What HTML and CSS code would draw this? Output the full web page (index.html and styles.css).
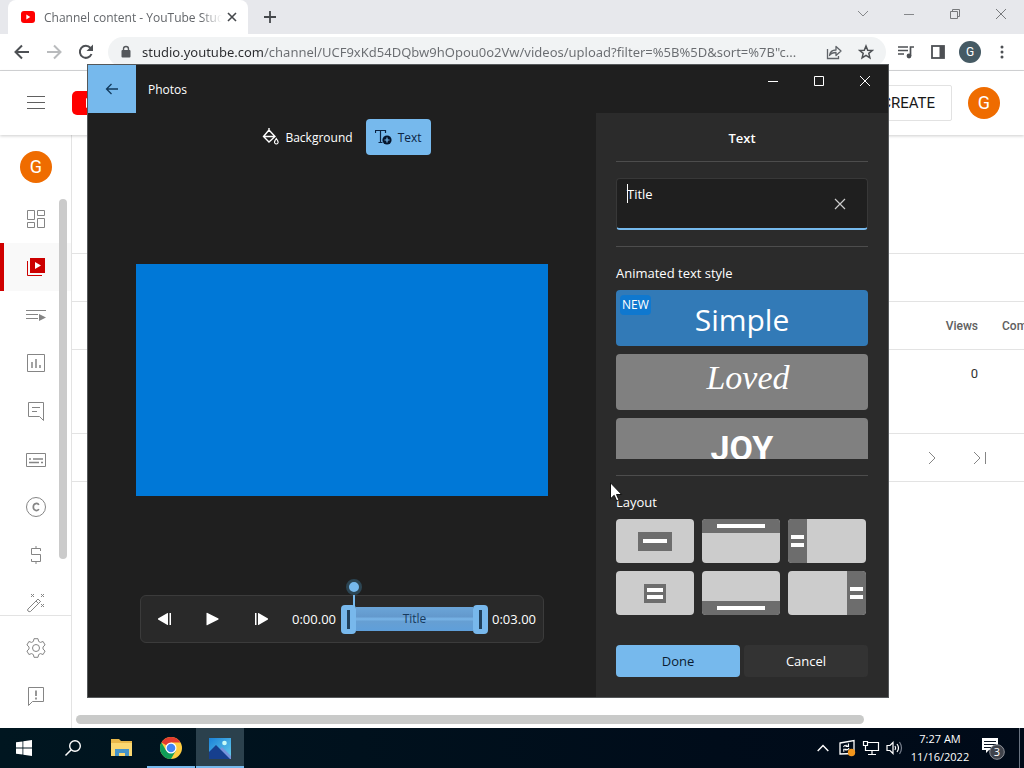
FILE: index.html
```html
<!DOCTYPE html>
<html lang="en">
<head>
<meta charset="utf-8">
<title>Channel content - YouTube Studio</title>
<link rel="stylesheet" href="styles.css">
</head>
<body>
<div class="desktop">
  <div class="browser">
    <div class="tabstrip">
      <div class="tab">
        <svg class="favicon" width="16" height="16" viewBox="0 0 16 16"><rect x="1" y="2" width="14" height="12" rx="3" fill="#f00"/><path d="M6.300 5.500v5l4-2.500z" fill="#fff"/></svg>
        <span class="tab-title">Channel content - YouTube Studio</span>
        <button class="tab-close" aria-label="Close tab"><svg width="10" height="10" viewBox="0 0 10 10"><path d="M1 1l8 8M9 1l-8 8" stroke="#45484c" stroke-width="1.600"/></svg></button>
      </div>
      <button class="new-tab" aria-label="New tab"><svg width="14" height="14" viewBox="0 0 14 14"><path d="M7 1v12M1 7h12" stroke="#45484c" stroke-width="1.800"/></svg></button>
      <div class="win-controls">
        <button aria-label="Search tabs"><svg width="12" height="12" viewBox="0 0 12 12"><path d="M1 3l5 5 5-5" fill="none" stroke="#85878a"/></svg></button>
        <button aria-label="Minimize"><svg width="12" height="12" viewBox="0 0 12 12"><path d="M1 6.500h10" stroke="#85878a"/></svg></button>
        <button aria-label="Restore"><svg width="12" height="12" viewBox="0 0 12 12"><path d="M1.500 3.500h7v7h-7zM3.500 3.500v-2h7v7h-2" fill="none" stroke="#77797c"/></svg></button>
        <button aria-label="Close"><svg width="12" height="12" viewBox="0 0 12 12"><path d="M1 1l10 10M11 1L1 11" stroke="#77797c"/></svg></button>
      </div>
    </div>
    <div class="toolbar">
      <button class="tool" aria-label="Back"><svg width="18" height="18" viewBox="0 0 18 18"><path d="M16 9H3M9 2.500L2.500 9 9 15.500" fill="none" stroke="#4d5054" stroke-width="2"/></svg></button>
      <button class="tool" aria-label="Forward"><svg width="18" height="18" viewBox="0 0 18 18"><path d="M2 9h13M9 2.500L15.500 9 9 15.500" fill="none" stroke="#b9bbbd" stroke-width="2"/></svg></button>
      <button class="tool" aria-label="Reload"><svg width="18" height="18" viewBox="0 0 18 18"><path d="M14.500 11A6 6 0 1 1 13.500 5" fill="none" stroke="#4d5054" stroke-width="2"/><path d="M16 1.500V8H9.500z" fill="#4d5054"/></svg></button>
      <div class="omnibox">
        <svg width="12" height="14" viewBox="0 0 12 14"><rect x="1.500" y="5" width="9" height="7.500" rx="1" fill="#55585c"/><path d="M3.500 5.500V4a2.500 2.500 0 0 1 5 0v1.500" fill="none" stroke="#55585c" stroke-width="1.400"/></svg>
        <input class="url" type="text" aria-label="Address" value="studio.youtube.com/channel/UCF9xKd54DQbw9hOpou0o2Vw/videos/upload?filter=%5B%5D&amp;sort=%7B&quot;c...">
        <button class="tool" aria-label="Share"><svg width="16" height="16" viewBox="0 0 16 16"><path d="M1.500 5v9.500h11V12" fill="none" stroke="#5f6368" stroke-width="1.300"/><path d="M3.500 11.500c.5-4 3-5.500 6.500-5.500V2.500L15 7l-5 4.500V8.500c-3 0-5 .7-6.500 3z" fill="none" stroke="#5f6368" stroke-width="1.300" stroke-linejoin="round"/></svg></button>
        <button class="tool" aria-label="Bookmark"><svg width="16" height="16" viewBox="0 0 16 16"><path d="M8 2l1.700 4.200 4.600.3-3.500 2.900 1.100 4.400L8 11.400l-3.900 2.400 1.100-4.400-3.500-2.900 4.600-.3z" fill="none" stroke="#4d5054" stroke-width="1.500"/></svg></button>
      </div>
      <button class="tool" aria-label="Media"><svg width="18" height="16" viewBox="0 0 18 16"><path d="M1 3h10M1 6.500h10M1 10h6" stroke="#4d5054" stroke-width="1.700"/><path d="M13.500 12V3H17" fill="none" stroke="#4d5054" stroke-width="1.700"/><circle cx="12" cy="12" r="2.400" fill="#4d5054"/></svg></button>
      <button class="tool" aria-label="Side panel"><svg width="14" height="14" viewBox="0 0 14 14"><rect x="1" y="1" width="12" height="12" fill="none" stroke="#4d5054" stroke-width="1.800"/><rect x="8.500" y="1" width="4.500" height="12" fill="#4d5054"/></svg></button>
      <button class="tool" aria-label="Profile"><span class="profile">G</span></button>
      <button class="tool" aria-label="Menu"><svg width="4" height="14" viewBox="0 0 4 14"><g fill="#4d5054"><circle cx="2" cy="2" r="1.500"/><circle cx="2" cy="7" r="1.500"/><circle cx="2" cy="12" r="1.500"/></g></svg></button>
    </div>
    <header class="studio-header">
      <button class="menu" aria-label="Guide"><svg width="18" height="14" viewBox="0 0 18 14"><path d="M0 .5h18M0 6.500h18M0 12.500h18" stroke="#606060"/></svg></button>
      <svg width="34" height="24" viewBox="0 0 34 24"><rect width="34" height="24" rx="5" fill="#f00"/><path d="M14 7v10l8-5z" fill="#fff"/></svg>
      <button class="create"><svg width="20" height="20" viewBox="0 0 20 20"><path d="M2 4h12v4l4-2v8l-4-2v4H2z" fill="#c00"/></svg>CREATE</button>
      <span class="avatar">G</span>
    </header>
    <div class="studio">
      <nav class="side">
        <div class="side-scroll">
          <span class="avatar">G</span>
          <a href="#" aria-label="Dashboard"><svg width="20" height="20" viewBox="0 0 20 20"><path d="M1.500 1.500h7v9h-7zM11.500 1.500h7v5h-7zM11.500 9.500h7v9h-7zM1.500 13.500h7v5h-7z"/></svg></a>
          <a href="#" class="active" aria-label="Content"><svg width="20" height="20" viewBox="0 0 20 20"><path d="M4 1h15v15H4z" fill="#c00"/><path d="M9 5v7l6-3.500z" fill="#fff"/><path d="M1.500 4v14.500H16" class="red"/></svg></a>
          <a href="#" aria-label="Playlists"><svg width="20" height="20" viewBox="0 0 20 20"><path d="M0 5.500h20M0 9.500h12M0 13.500h12"/><path d="M13 9v7l7-3.500z" class="solid"/></svg></a>
          <a href="#" aria-label="Analytics"><svg width="20" height="20" viewBox="0 0 20 20"><path d="M1.500 1.500h17v17h-17z"/><path d="M6 9v6M10 6v9M14 12v3" stroke-width="1.500"/></svg></a>
          <a href="#" aria-label="Comments"><svg width="20" height="20" viewBox="0 0 20 20"><path d="M2.500 1.500h15v18l-4-4h-11zM6 6.500h8M6 10.500h5"/></svg></a>
          <a href="#" aria-label="Subtitles"><svg width="20" height="20" viewBox="0 0 20 20"><path d="M.5 4.500h19v13H.5z"/><path d="M3 10h2M7 10h10M3 13.500h10M15 13.500h2" stroke-width="1.500"/></svg></a>
          <a href="#" aria-label="Copyright"><svg width="20" height="20" viewBox="0 0 20 20"><circle cx="10" cy="10" r="9.500"/><path d="M12.800 8c-1-2.500-5.500-2-5.500 2s4.500 4.500 5.500 2" stroke-width="1.700"/></svg></a>
          <a href="#" aria-label="Earn"><svg width="20" height="20" viewBox="0 0 20 20"><path d="M14.500 6V3.500h-9v6h9v7h-9V14M10 1v2.500M10 16.500V19"/></svg></a>
          <a href="#" aria-label="Customization"><svg width="20" height="20" viewBox="0 0 20 20"><path d="M2 16L12 6l2.500 2.500-10 10q-1.500.5-2.500-.5t0-2zM10 8l2.500 2.500"/><path d="M5 1l3 3M8 1L5 4M15 1l3 3M18 1l-3 3M15 11l3 3M18 11l-3 3M12 6l2.500 2.500"/></svg></a>
          <span class="side-thumb"></span>
        </div>
        <div class="side-foot">
          <a href="#" aria-label="Settings"><svg width="20" height="20" viewBox="0 0 20 20"><path d="M8 .7h4l.6 2.700 1.800 1 2.700-.9 2 3.500-2.100 1.900v2.200l2.100 1.900-2 3.500-2.700-.9-1.800 1-.6 2.700H8l-.6-2.700-1.800-1-2.700.9-2-3.500L3 11.100V8.900L.9 7l2-3.500 2.700.9 1.800-1z" stroke-linejoin="round"/><circle cx="10" cy="10" r="3.500"/></svg></a>
          <a href="#" aria-label="Send feedback"><svg width="20" height="20" viewBox="0 0 20 20"><path d="M2.500 1.500h15v14h-11l-4 4z"/><path d="M10 4.500v5.500M10 11.500v2" stroke-width="1.700"/></svg></a>
        </div>
      </nav>
      <main class="content">
        <div class="band heading"></div>
        <div class="band filter"></div>
        <table class="videos">
          <thead><tr><th class="video"></th><th class="num">Views</th><th class="next">Comments</th></tr></thead>
          <tbody><tr><td></td><td class="num">0</td><td></td></tr></tbody>
        </table>
        <div class="band pager">
          <button aria-label="Next page"><svg width="14" height="14" viewBox="0 0 14 14"><path d="M4 1l6 6-6 6"/></svg></button>
          <button aria-label="Last page"><svg width="14" height="14" viewBox="0 0 14 14"><path d="M1 1l6 6-6 6M12.500 1v12"/></svg></button>
        </div>
        <div class="hscroll"><span></span></div>
      </main>
    </div>
  </div>

  <footer class="taskbar">
    <button class="task" aria-label="Start"><svg width="16" height="16" viewBox="0 0 16 16"><path d="M0 2.300L6.500 1.400V7.600H0zM7.300 1.300L16 0v7.600H7.300zM0 8.400h6.500v6.200L0 13.700zM7.300 8.400H16V16l-8.700-1.300z" fill="#fff"/></svg></button>
    <button class="task" aria-label="Search"><svg width="18" height="18" viewBox="0 0 18 18"><circle cx="11" cy="7" r="5.300" fill="none" stroke="#fff" stroke-width="1.400"/><path d="M7.200 10.800L1.500 16.500" stroke="#fff" stroke-width="1.500"/></svg></button>
    <button class="task" aria-label="File Explorer"><svg width="22" height="20" viewBox="0 0 22 20"><path d="M0 1h8l2 2h11v15H0z" fill="#e9b84a"/><path d="M0 5h21v13H0z" fill="#fbd871"/><path d="M4 18v-7h14v7h-4v-3H8v3z" fill="#4593c9"/></svg></button>
    <button class="task running" aria-label="Chrome"><svg width="22" height="22" viewBox="0 0 22 22"><circle cx="11" cy="11" r="11" fill="#ffcd40"/><path d="M11 11L1.470 5.500A11 11 0 0 1 20.530 5.500H11z" fill="#e33b2e"/><path d="M1.470 5.500A11 11 0 0 0 11 22L15.800 13.700 6.200 13.700z" fill="#0f9d58"/><circle cx="11" cy="11" r="5.500" fill="#fff"/><circle cx="11" cy="11" r="4.300" fill="#4285f4"/></svg></button>
    <button class="task running current" aria-label="Photos"><svg width="22" height="21" viewBox="0 0 22 21"><defs><linearGradient id="sky" x2="1" y2="1"><stop stop-color="#1b82d8"/><stop offset="1" stop-color="#66cdec"/></linearGradient></defs><path d="M0 0h22v21H0z" fill="url(#sky)"/><path d="M10 12l3-3 9 9v3H12z" fill="#7793dc"/><path d="M0 14l7-7 14 14H0z" fill="#163f8e"/><circle cx="15.500" cy="5" r="2.300" fill="#c9fbf7"/></svg></button>
    <div class="tray">
      <button aria-label="Show hidden icons"><svg width="12" height="8" viewBox="0 0 12 8"><path d="M.7 7L6 1.500 11.300 7" fill="none" stroke="#fff" stroke-width="1.400"/></svg></button>
      <button aria-label="Updates"><svg width="18" height="18" viewBox="0 0 18 18"><path d="M2 4l14-2.500v13L2 15z" fill="none" stroke="#fff" stroke-width="1.300"/><path d="M5.500 8q1-2.300 4-1.500M10.500 4.500v3h-3M11 9q-1 2.600-4 1.700M5.800 12.800v-2.600h2.800" fill="none" stroke="#fff" stroke-width="1.100"/><circle cx="13.500" cy="13.500" r="3.700" fill="#f2951c"/></svg></button>
      <button aria-label="Network"><svg width="18" height="16" viewBox="0 0 18 16"><path d="M5.500 2.500h11v8h-13V7M10 10.500v4M6 14.500h8M1.500 1.500h4v4h-4zM3.500 5.500v5" fill="none" stroke="#fff" stroke-width="1.200"/></svg></button>
      <button aria-label="Volume"><svg width="18" height="16" viewBox="0 0 18 16"><path d="M1 5.500h3l3-3v11l-3-3H1z" fill="none" stroke="#fff" stroke-width="1.200"/><path d="M9 6q1.300 2 0 4M11 4q3 4 0 8" fill="none" stroke="#fff" stroke-width="1.200"/><path d="M13.500 2q4 6 0 12" fill="none" stroke="#777f8c" stroke-width="1.200"/></svg></button>
      <div class="clock"><span>7:27 AM</span><span>11/16/2022</span></div>
      <button class="action" aria-label="Notifications"><svg width="24" height="24" viewBox="0 0 24 24"><path d="M1 2h16v12H8l-3 3v-3H1z" fill="#fff"/><path d="M3 5.500h12M3 8.500h12M3 11.500h8" stroke="#0a1422" stroke-width="1.200"/><circle cx="16" cy="16" r="7.300" fill="#40434b" stroke="#8e9198"/></svg><span class="badge">3</span></button>
      <span class="peek"></span>
    </div>
  </footer>

  <section class="photos">
    <div class="titlebar">
      <button class="back" aria-label="Back"><svg width="14" height="12" viewBox="0 0 14 12"><path d="M13 6H1.500M6.500 1l-5 5 5 5" fill="none" stroke="#123a5c" stroke-width="1.300"/></svg></button>
      <span class="app-name">Photos</span>
      <div class="photo-controls">
        <button aria-label="Minimize"><svg width="12" height="12" viewBox="0 0 12 12"><path d="M1 6.500h10"/></svg></button>
        <button aria-label="Maximize"><svg width="12" height="12" viewBox="0 0 12 12"><path d="M1.500 1.500h9v9h-9z"/></svg></button>
        <button aria-label="Close"><svg width="12" height="12" viewBox="0 0 12 12"><path d="M1 1l10 10M11 1L1 11"/></svg></button>
      </div>
    </div>
    <div class="editor">
      <div class="workspace">
        <div class="modes">
          <button class="mode"><svg width="17" height="18" viewBox="0 0 17 18"><path d="M7 2L1.500 8.500 7 14l6-5.500zM7 0v4M2 8.500h11" fill="none" stroke="#fff" stroke-width="1.400"/><path d="M14.300 10.500q-2.300 3-1.600 4.500 1.600 2 3.200 0 .7-1.500-1.600-4.500z" fill="none" stroke="#fff" stroke-width="1.200"/></svg>Background</button>
          <button class="mode selected"><svg width="17" height="18" viewBox="0 0 17 18"><path d="M.5 5V2.500h10V5M5.500 2.500v12M3.500 14.500h4" fill="none" stroke="#0b2444" stroke-width="1.200"/><circle cx="12" cy="12" r="4.600" fill="#04142c"/><path d="M12 9.500v5M9.500 12h5" stroke="#78b8ec" stroke-width="1.200"/></svg>Text</button>
        </div>
        <div class="stage"><div class="canvas"></div></div>
        <div class="transport">
          <button aria-label="Previous frame"><svg width="14" height="14" viewBox="0 0 14 14"><path d="M9.500 1q.5-.3.500.5v11q0 .8-.5.500L0 7.500v-1zM11.500 1H13v12h-1.500z"/></svg></button>
          <button aria-label="Play"><svg width="14" height="14" viewBox="0 0 14 14"><path d="M.5 1v12q.5.500 1 0L12.500 7.500v-1L1.500 1q-.5-.5-1 0z"/></svg></button>
          <button aria-label="Next frame"><svg width="14" height="14" viewBox="0 0 14 14"><path d="M4.500 1q-.5-.3-.5.500v11q0 .8.500.500l9.500-5.500v-1zM1 1h1.500v12H1z"/></svg></button>
          <span class="time start">0:00.00</span>
          <div class="range">
            <span class="handle"></span><span class="span">Title</span><span class="handle"></span>
            <span class="knob"></span>
          </div>
          <span class="time">0:03.00</span>
        </div>
      </div>
      <aside class="panel">
        <h2>Text</h2>
        <div class="field">
          <textarea aria-label="Title text">Title</textarea>
          <span class="caret"></span>
          <button aria-label="Clear"><svg width="12" height="12" viewBox="0 0 12 12"><path d="M1 1l10 10M11 1L1 11" stroke="#ccc" stroke-width="1.200"/></svg></button>
        </div>
        <h3>Animated text style</h3>
        <div class="styles">
          <button class="style simple"><span class="new">NEW</span>Simple</button>
          <button class="style loved">Loved</button>
          <button class="style joy">JOY</button>
        </div>
        <h3 class="layout-title">Layout</h3>
        <div class="layouts">
          <button class="tile center" aria-label="Center line"><span class="block wide"><i></i></span></button>
          <button class="tile top" aria-label="Top"><span class="block"><i></i></span></button>
          <button class="tile left" aria-label="Left"><span class="block"><i></i><i></i></span></button>
          <button class="tile center" aria-label="Center"><span class="block"><i></i><i></i></span></button>
          <button class="tile bottom" aria-label="Bottom"><span class="block"><i></i></span></button>
          <button class="tile right" aria-label="Right"><span class="block"><i></i><i></i></span></button>
        </div>
        <div class="actions"><button class="done">Done</button><button class="cancel">Cancel</button></div>
      </aside>
    </div>
  </section>
  <svg class="cursor" width="13" height="20" viewBox="0 0 13 20"><path d="M.5.8v16l3.700-3.500 2.500 5.700 2.300-1-2.500-5.500h5.200z" fill="#fff" stroke="#111"/></svg>
</div>
</body>
</html>
```
FILE: styles.css
```css
* { box-sizing: border-box; }
body { margin: 0; font-family: "Open Sans", "Noto Sans", sans-serif; font-size: 13px; }
button { border: 0; padding: 0; background: none; color: inherit; font: inherit; display: flex; align-items: center; justify-content: center; }
svg { display: block; flex: none; }
h2, h3 { margin: 0; }

.desktop { position: relative; display: flex; flex-direction: column; height: 100vh; overflow: hidden; background: #fff; }
.browser { flex: 1; min-height: 0; display: flex; flex-direction: column; }

.tabstrip { display: flex; height: 34px; padding-left: 8px; background: #e7e8ec; }
.tab { display: flex; align-items: center; width: 240px; padding: 0 10px 0 12px; background: #fff; border-radius: 8px 8px 0 0; }
.tab-title { flex: 1; min-width: 0; margin-left: 8px; overflow: hidden; white-space: nowrap; font-size: 12px; color: #63666a; -webkit-mask-image: linear-gradient(90deg, #000 88%, transparent); mask-image: linear-gradient(90deg, #000 88%, transparent); }
.tab-close { width: 12px; height: 16px; margin-left: 4px; }
.new-tab { width: 28px; margin-left: 8px; }
.win-controls { display: flex; margin-left: auto; height: 28px; }
.win-controls button { width: 46px; }

.toolbar { display: flex; align-items: center; height: 37px; padding: 0 6px; background: #fff; border-bottom: 1px solid #d5d6d8; }
.tool { width: 32px; height: 28px; flex: none; }
.omnibox { flex: 1; display: flex; align-items: center; height: 30px; margin: 0 4px 0 6px; padding: 0 4px 0 12px; border-radius: 15px; background: #f1f3f4; }
.url { flex: 1; min-width: 0; margin-left: 10px; padding: 0; border: 0; outline: 0; font: 13px "Noto Sans", "Open Sans", sans-serif; color: transparent; background: linear-gradient(90deg, #2b2c2f 121px, #696c70 121px); -webkit-background-clip: text; background-clip: text; }
.profile { width: 22px; height: 22px; border-radius: 50%; background: #455a64; color: #fff; font: 12px/22px Roboto, sans-serif; }

.studio-header { position: relative; display: flex; align-items: center; height: 64px; padding-right: 24px; flex: none; box-shadow: 0 1px 3px rgba(0, 0, 0, .2); }
.menu { width: 72px; height: 40px; }
.create { height: 36px; margin: 0 16px 0 auto; padding: 0 16px 0 12px; gap: 8px; border: 1px solid #e2e2e2; border-radius: 2px; font: 15px Roboto, sans-serif; color: #181818; }
.avatar { width: 32px; height: 32px; border-radius: 50%; background: #ef6c00; color: #fff; text-align: center; font: 18px/32px Roboto, sans-serif; flex: none; }

.studio { flex: 1; min-height: 0; display: flex; }
.side { display: flex; flex-direction: column; width: 72px; border-right: 1px solid #e3e3e3; }
.side-scroll { position: relative; flex: 1; min-height: 0; overflow: hidden; display: flex; flex-direction: column; padding-top: 16px; }
.side-scroll .avatar { margin: 0 0 12px 20px; }
.side a { display: flex; align-items: center; height: 48px; padding-left: 26px; flex: none; }
.side svg { fill: none; stroke: #858585; }
.side .solid { fill: #858585; stroke: none; }
.side .red { stroke: #c00; }
.side .active { padding-left: 22px; border-left: 4px solid #d00000; background: #f9f9f9; }
.side .active path:not(.red) { stroke: none; }
.side-thumb { position: absolute; top: 64px; right: 4px; width: 8px; height: 360px; border-radius: 4px; background: #cbcbcb; }
.side-foot { padding: 8px 0; border-top: 1px solid #e3e3e3; }

.content { flex: 1; min-width: 0; display: flex; flex-direction: column; overflow: hidden; }
.band { height: 48px; border-bottom: 1px solid #e3e3e3; flex: none; }
.heading { height: 119px; }
.videos { width: 100%; table-layout: fixed; border-collapse: separate; border-spacing: 0; font: 13px Roboto, sans-serif; }
.videos th, .videos td { padding: 0; border-bottom: 1px solid #e3e3e3; white-space: nowrap; overflow: hidden; }
.videos th { height: 48px; font-size: 12px; font-weight: 500; color: #606060; }
.videos td { height: 84px; padding-top: 16px; vertical-align: top; color: #333; }
.videos .num { width: 80px; text-align: right; }
.videos .next { width: 46px; padding-left: 24px; text-align: left; }
.pager { display: flex; justify-content: flex-end; align-items: center; padding-right: 20px; }
.pager button { width: 48px; height: 40px; }
.pager svg { fill: none; stroke: #858585; }
.hscroll { margin-top: auto; padding: 0 160px 4px 4px; }
.hscroll span { display: block; height: 9px; border-radius: 5px; background: #c9cac9; }

.taskbar { display: flex; gap: 1px; height: 40px; flex: none; background: linear-gradient(90deg, #001620, #000c1a 70%, #000a18); color: #fff; }
.task { width: 48px; border-bottom: 2px solid transparent; border-top: 2px solid transparent; }
.running { border-bottom-color: #76b9ed; }
.current { background: #2b414d; }
.tray { display: flex; align-items: center; margin-left: auto; }
.tray button { width: 24px; height: 40px; }
.clock { display: flex; flex-direction: column; align-items: center; width: 66px; font-size: 11px; line-height: 18px; }
.tray .action { position: relative; width: 40px; }
.badge { position: absolute; left: 17px; top: 17px; width: 14px; text-align: center; font-size: 11px; line-height: 14px; }
.tray .action svg { margin-right: 0; }
.action .badge { left: 17px; }
.peek { width: 5px; height: 40px; margin-left: 6px; border-left: 1px solid #6a7482; }

.photos { position: absolute; left: 87px; right: 135px; top: 64px; bottom: 70px; display: flex; flex-direction: column; border: 1px solid #55585a; background: #1f1f1f; color: #fff; }
.titlebar { display: flex; height: 48px; }
.back { width: 48px; background: #76b9ed; }
.app-name { margin-left: 12px; line-height: 50px; font-size: 12px; }
.photo-controls { display: flex; height: 32px; margin-left: auto; }
.photo-controls button { width: 46px; }
.photo-controls svg { fill: none; stroke: #fff; }
.editor { flex: 1; min-height: 0; display: flex; }
.workspace { flex: 1; min-width: 0; display: flex; flex-direction: column; padding: 6px 48px 54px; }
.modes { display: flex; justify-content: center; gap: 4px; margin-bottom: 10px; }
.mode { height: 36px; padding: 0 9px; gap: 6px; border-radius: 4px; font-size: 12px; }
.selected { background: #76b9ed; color: #0b2444; }
.stage { flex: 1; display: flex; align-items: center; }
.canvas { width: 100%; aspect-ratio: 16 / 9; background: #0078d7; }
.transport { display: flex; align-items: center; height: 48px; margin: 0 4px; padding-right: 7px; border: 1px solid #3b3b3b; border-radius: 6px; background: #292929; }
.transport button { width: 48px; height: 46px; flex: none; }
.transport svg { fill: #fff; }
.time { font-size: 13px; line-height: 18px; margin-left: 4px; }
.start { margin-left: 7px; }
.range { position: relative; flex: 1; display: flex; align-items: center; margin-left: 5px; }
.handle { width: 15px; height: 29px; border-radius: 4px; flex: none; background: linear-gradient(#20405c, #20405c) center / 3px 19px no-repeat #78b8ec; }
.span { flex: 1; height: 24px; text-align: center; font-size: 12px; line-height: 24px; color: #173a5e; background: linear-gradient(#6ba5d8, #6399cd 40%, #79b5e8 50%, #669fd3 60%, #5f9fda); }
.knob { position: absolute; left: 5px; top: -26px; width: 16px; height: 16px; border: 3px solid #2c4553; border-radius: 50%; background: #76b9ed; }
.knob::after { content: ""; position: absolute; left: 4px; top: 13px; width: 2px; height: 12px; background: #76b9ed; }

.panel { width: 292px; flex: none; display: flex; flex-direction: column; padding: 0 20px 20px; background: #2b2b2b; }
.panel h2 { height: 49px; border-bottom: 1px solid #4d4d4d; text-align: center; font-size: 13px; font-weight: 600; line-height: 50px; }
.field { position: relative; display: flex; height: 52px; margin: 16px 0; align-items: center; border: 1px solid #383838; border-bottom: 2px solid #76b9ed; border-radius: 4px; background: #1f1f1f; }
.field textarea { flex: 1; min-width: 0; height: 48px; padding: 5px 10px; border: 0; outline: 0; resize: none; background: none; color: #fff; font: 13px/19px "Open Sans", sans-serif; }
.field button { width: 32px; height: 32px; margin-right: 11px; }
.caret { position: absolute; left: 10px; top: 5px; width: 1px; height: 19px; background: #fff; }
.panel h3 { height: 44px; border-top: 1px solid #4d4d4d; font-size: 13px; font-weight: 400; line-height: 52px; }
.styles { display: flex; flex-direction: column; gap: 8px; height: 169px; overflow: hidden; flex: none; }
.style { position: relative; height: 56px; flex: none; border-radius: 4px; background: #808080; }
.simple { padding-top: 2px; background: #327ab7; font-size: 30px; }
.new { position: absolute; left: 4px; top: 5px; padding: 0 2px; border-radius: 4px; background: #0f78cf; font-size: 12px; line-height: 20px; }
.loved { padding: 0 0 8px 12px; font: italic 34px "Liberation Serif", serif; }
.joy { padding-top: 4px; font: bold 34px "Liberation Sans Narrow", Roboto, sans-serif; }
.panel .layout-title { margin-top: 16px; }
.layouts { display: grid; grid-template-columns: repeat(3, 78px); grid-auto-rows: 44px; gap: 8px; }
.tile { display: flex; align-items: center; justify-content: center; overflow: hidden; border-radius: 4px; background: #ccc; }
.block { display: flex; flex-direction: column; align-items: center; justify-content: center; gap: 3px; width: 22px; height: 19px; background: #6d6d6d; }
.block i { width: 16px; height: 4px; background: #fff; }
.block.wide { width: 34px; }
.block.wide i { width: 24px; }
.top { align-items: flex-start; }
.bottom { align-items: flex-end; }
.top .block, .bottom .block { width: 100%; height: 14px; }
.top i, .bottom i { width: 48px; }
.left { justify-content: flex-start; }
.right { justify-content: flex-end; }
.left .block, .right .block { width: 19px; height: 100%; gap: 4px; }
.left i, .right i { width: 13px; }
.actions { display: grid; grid-template-columns: 1fr 1fr; gap: 4px; margin-top: auto; }
.actions button { height: 32px; border-radius: 4px; }
.done { background: #76b9ed; color: #0b1b30; }
.cancel { background: #333; }
.cursor { position: absolute; left: 610px; top: 482px; }
```
